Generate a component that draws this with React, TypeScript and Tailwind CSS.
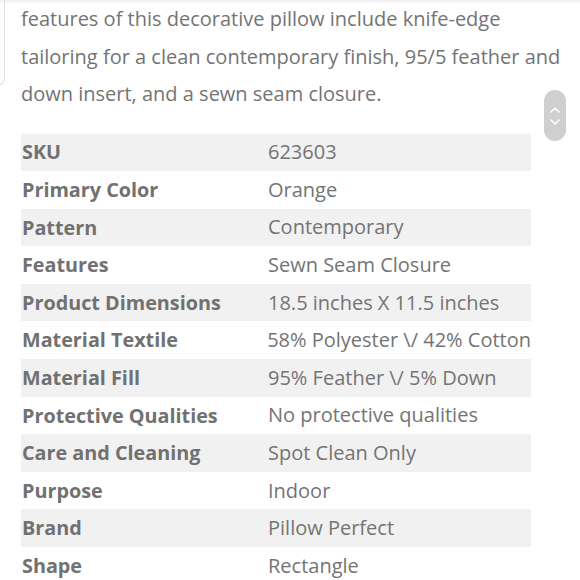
import React from 'react';

const specs: [string, string][] = [
  ['SKU', '623603'],
  ['Primary Color', 'Orange'],
  ['Pattern', 'Contemporary'],
  ['Features', 'Sewn Seam Closure'],
  ['Product Dimensions', '18.5 inches X 11.5 inches'],
  ['Material Textile', '58% Polyester \\/ 42% Cotton'],
  ['Material Fill', '95% Feather \\/ 5% Down'],
  ['Protective Qualities', 'No protective qualities'],
  ['Care and Cleaning', 'Spot Clean Only'],
  ['Purpose', 'Indoor'],
  ['Brand', 'Pillow Perfect'],
  ['Shape', 'Rectangle'],
];

const App: React.FC = () => {
  return (
    <div
      className="relative w-[580px] h-[580px] overflow-hidden bg-white text-[#747474]"
      style={{ fontFamily: '"Open Sans", "Liberation Sans", sans-serif' }}
    >
      {/* top shadow and left card edge */}
      <div className="absolute top-0 left-0 right-0 h-[4px] bg-gradient-to-b from-[#efefef] to-white" />
      <div className="absolute left-[-10px] top-[-10px] w-[15px] h-[96px] border-r border-b border-[#dedede] rounded-br-[8px]" />

      <div className="pl-[21px] pr-[8px]">
        <p className="text-[20px] leading-[37.5px] m-0">
          features of this decorative pillow include knife-edge tailoring for a clean contemporary finish, 95/5 feather and
          down insert, and a sewn seam closure.
        </p>

        <div className="mt-[21px] w-[510px]">
          {specs.map(([label, value], i) => (
            <div
              key={label}
              className={`flex h-[37.6px] items-center ${i % 2 === 0 ? 'bg-[#f1f1f1]' : 'bg-white'}`}
            >
              <div className="w-[247px] pl-[1px] text-[19.8px] font-bold whitespace-nowrap text-[#717171]">{label}</div>
              <div className="flex-1 text-[20px] whitespace-nowrap">{value}</div>
            </div>
          ))}
        </div>
      </div>

      {/* scroll up/down pill */}
      <div className="absolute left-[544px] top-[90px] w-[22px] h-[51px] rounded-full bg-[#cfcfcf] flex flex-col items-center justify-center gap-[6px]">
        <svg width="10" height="6" viewBox="0 0 10 6" fill="none">
          <path d="M1 5 L5 1 L9 5" stroke="white" strokeWidth="1.5" strokeLinecap="round" strokeLinejoin="round" />
        </svg>
        <svg width="10" height="6" viewBox="0 0 10 6" fill="none">
          <path d="M1 1 L5 5 L9 1" stroke="white" strokeWidth="1.5" strokeLinecap="round" strokeLinejoin="round" />
        </svg>
      </div>
    </div>
  );
};

export default App;
